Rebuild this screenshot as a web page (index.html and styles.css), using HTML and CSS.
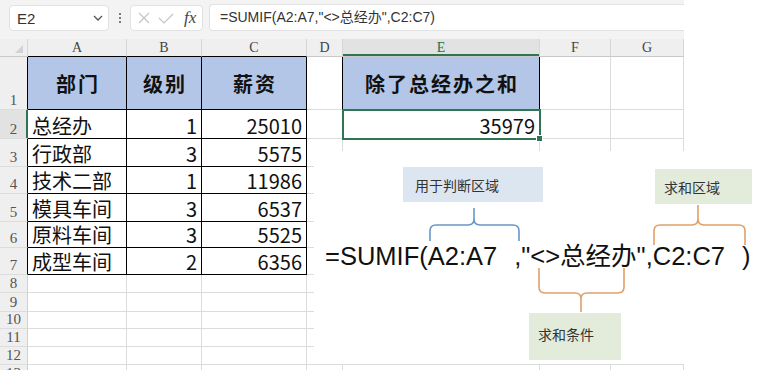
FILE: index.html
```html
<!DOCTYPE html>
<html lang="zh-CN">
    <head>
        <meta charset="utf-8">
        <title>SUMIF 除了总经办之和</title>
        <link rel="stylesheet" href="styles.css">
    </head>
    <body>
        <div class="page">
            <div class="app">
                <div class="toolbar">
                    <div class="namebox">
                        <span>E2</span>
                        <svg width="10" height="6" viewBox="0 0 10 6"><polyline points="1,1 5,5 9,1" fill="none" stroke="#555" stroke-width="1.3"/></svg>
                    </div>
                    <div class="more"><i></i><i></i><i></i></div>
                    <div class="btns">
                        <svg width="12" height="12" viewBox="0 0 12 12"><path d="M1 1 L11 11 M11 1 L1 11" stroke="#c4c4c4" stroke-width="1.2"/></svg>
                        <svg width="16" height="11" viewBox="0 0 16 11"><polyline points="1,5 6,10 15,1" fill="none" stroke="#c4c4c4" stroke-width="1.2"/></svg>
                        <span class="fx">fx</span>
                    </div>
                    <div class="fbar">=SUMIF(A2:A7,"&lt;&gt;总经办",C2:C7)</div>
                </div>

                <div class="sheet">
                    <!-- column headers -->
                    <div class="ch corner"></div>
                    <div class="ch tb">A</div>
                    <div class="ch tb">B</div>
                    <div class="ch tb">C</div>
                    <div class="ch">D</div>
                    <div class="ch on">E</div>
                    <div class="ch">F</div>
                    <div class="ch">G</div>

                    <div class="rh tl">1</div>
                    <div class="hd t">部门</div>
                    <div class="hd t">级别</div>
                    <div class="hd t">薪资</div>
                    <div class="edge"></div>
                    <div class="hd t big">除了总经办之和</div>
                    <div></div>
                    <div></div>

                    <div class="rh on">2</div>
                    <div class="s t">总经办</div>
                    <div class="n t">1</div>
                    <div class="n t">25010</div>
                    <div></div>
                    <div class="n sel">35979</div>
                    <div></div>
                    <div></div>

                    <div class="rh tl">3</div>
                    <div class="s t">行政部</div>
                    <div class="n t">3</div>
                    <div class="n t">5575</div>
                    <div></div>
                    <div></div>
                    <div></div>
                    <div></div>

                    <div class="rh tl">4</div>
                    <div class="s t">技术二部</div>
                    <div class="n t">1</div>
                    <div class="n t">11986</div>
                    <div></div>
                    <div></div>
                    <div></div>
                    <div></div>

                    <div class="rh tl">5</div>
                    <div class="s t">模具车间</div>
                    <div class="n t">3</div>
                    <div class="n t">6537</div>
                    <div></div>
                    <div></div>
                    <div></div>
                    <div></div>

                    <div class="rh tl">6</div>
                    <div class="s t">原料车间</div>
                    <div class="n t">3</div>
                    <div class="n t">5525</div>
                    <div></div>
                    <div></div>
                    <div></div>
                    <div></div>

                    <div class="rh tl">7</div>
                    <div class="s t">成型车间</div>
                    <div class="n t">2</div>
                    <div class="n t">6356</div>
                    <div></div>
                    <div></div>
                    <div></div>
                    <div></div>

                    <div class="rh">8</div><div></div><div></div><div></div><div></div><div></div><div></div><div></div>
                    <div class="rh">9</div><div></div><div></div><div></div><div></div><div></div><div></div><div></div>
                    <div class="rh">10</div><div></div><div></div><div></div><div></div><div></div><div></div><div></div>
                    <div class="rh">11</div><div></div><div></div><div></div><div></div><div></div><div></div><div></div>
                    <div class="rh">12</div><div></div><div></div><div></div><div></div><div></div><div></div><div></div>
                    <div class="rh">13</div><div></div><div></div><div></div><div></div><div></div><div></div><div></div>
                </div>
            </div>

            <!-- pasted explanation picture -->
            <div class="note">
                <svg class="braces" width="449" height="213" viewBox="0 0 449 213">
                    <path class="blue" d="M116 90 V80 Q116 74 122 74 H154 Q160 74 160 68 V57 M160 68 Q160 74 166 74 H199 Q205 74 205 80 V90"/>
                    <path class="orange" d="M225 117 V136 Q225 142 231 142 H261 Q267 142 267 148 V161 M267 148 Q267 142 273 142 H304 Q310 142 310 136 V117"/>
                    <path class="orange" d="M340 94 V80 Q340 74 346 74 H378 Q384 74 384 68 V54 M384 68 Q384 74 390 74 H425 Q431 74 431 80 V94"/>
                </svg>
                <div class="tag blue-tag">用于判断区域</div>
                <div class="tag sum-range">求和区域</div>
                <div class="tag sum-cond">求和条件</div>
                <div class="formula">=SUMIF(A2:A7<span class="gap"></span>,"&lt;&gt;总经办",C2:C7<span class="gap"></span>)</div>
            </div>
        </div>
    </body>
</html>
```

FILE: styles.css
```css
body{margin: 0; background: #fff; overflow: hidden;}
.page{position: relative; width: 763px; height: 370px; overflow: hidden; font-family: "Noto Sans CJK SC", sans-serif;}
.app{width: 684px; background: #f3f3f3;}

/* formula toolbar */
.toolbar{height: 39px; box-sizing: border-box; padding: 5px 0 0 9px; display: flex; align-items: flex-start;}
.namebox{width: 100px; height: 26px; box-sizing: border-box; background: #fff; border: 1px solid #e2e2e2; border-radius: 4px; display: flex; align-items: center; justify-content: space-between; padding: 0 5px 0 7px; font: 15px "Liberation Sans", sans-serif; color: #333;}
.more{width: 21px; height: 26px; display: flex; flex-direction: column; align-items: center; justify-content: center; gap: 2px;}
.more i{width: 2px; height: 2px; background: #555; border-radius: 1px;}
.btns{width: 73px; height: 26px; box-sizing: border-box; background: #fff; border: 1px solid #e2e2e2; border-radius: 4px; display: flex; align-items: center; padding-left: 7px; gap: 8px;}
.fx{font: italic 17px "Liberation Serif", serif; color: #444; margin-left: 2px;}
.fbar{flex: 1; margin: -1px 0 0 6px; height: 27px; box-sizing: border-box; background: #fff; border: 1px solid #e2e2e2; border-right: none; border-radius: 4px 0 0 4px; padding-left: 10px; font: 14px "Liberation Sans", "Noto Sans CJK SC", sans-serif; line-height: 25px; color: #333; white-space: nowrap;}

/* grid */
.sheet{display: grid; grid-template-columns: 28px 99px 75px 105px 36px 197px 71px 73px; grid-template-rows: 18px 53px 29px 28px 27px 28px 26px 27px 18px 19px 17px 18px 18px 18px; background: #fff;}
.sheet > div{box-sizing: border-box; border-right: 1px solid #dcdcdc; border-bottom: 1px solid #dcdcdc; display: flex; align-items: flex-end; white-space: nowrap; overflow: hidden; color: #111;}
.ch{background: #efefef; justify-content: center; align-items: center !important; font: 14px "Liberation Serif", serif; color: #444 !important; border-bottom-color: #c9c9c9 !important; border-right-color: #d6d6d6 !important;}
.ch.tb{border-bottom-color: #000 !important;}
.ch.on{background: #e2e2e2; color: #217346 !important; box-shadow: inset 0 -2px 0 #2e7553;}
.corner{position: relative;}
.corner::after{content: ""; position: absolute; right: 4px; bottom: 3px; border-left: 8px solid transparent; border-bottom: 8px solid #d3d3d3;}
.rh{background: #efefef; justify-content: center; font: 15px "Liberation Serif", serif; line-height: 16px; padding-bottom: 1px; color: #555 !important; border-right-color: #d0d0d0 !important;}
.rh.tl{border-right-color: #000 !important;}
.rh.on{background: #e2e2e2; border-right-color: #2e7553 !important; box-shadow: inset -1px 0 0 #2e7553;}
.t{border-right-color: #000 !important; border-bottom-color: #000 !important;}
.edge{border-right-color: #000 !important;}
.hd{background: #b4c6e7; justify-content: center; align-items: center !important; font-size: 20px; font-weight: 700; letter-spacing: 2px; padding-left: 2px;}
.s{font-size: 20px; line-height: 24px; padding-left: 4px;}
.n{justify-content: flex-end; font-size: 20px; line-height: 24px; padding-right: 4px;}
.sel{position: relative; overflow: visible !important; outline: 2px solid #2e7553; outline-offset: -1px;}
.sel::after{content: ""; position: absolute; right: -4px; bottom: -4px; width: 5px; height: 5px; background: #2e7553; border: 1px solid #fff;}

/* explanation picture */
.note{position: absolute; left: 314px; top: 151px; width: 449px; height: 213px; background: #fff;}
.braces{position: absolute; left: 0; top: 0;}
.braces path{fill: none; stroke-width: 1.6;}
.braces .blue{stroke: #6b96c8;}
.braces .orange{stroke: #e0a06a;}
.tag{position: absolute; box-sizing: border-box; display: flex; align-items: center; font-size: 14px; color: #333;}
.blue-tag{left: 89px; top: 16px; width: 140px; height: 35px; padding-left: 12px; background: #dce6f1;}
.sum-range{left: 341px; top: 18px; width: 97px; height: 35px; padding-left: 9px; background: #e3ebda;}
.sum-cond{left: 215px; top: 162px; width: 92px; height: 47px; padding-left: 9px; padding-bottom: 6px; background: #e3ebda;}
.formula{position: absolute; left: 11px; top: 93px; font: 25.5px "Liberation Sans", "Noto Sans CJK SC", sans-serif; line-height: 25px; color: #111; white-space: nowrap;}
.gap{display: inline-block; width: 17px;}
```
